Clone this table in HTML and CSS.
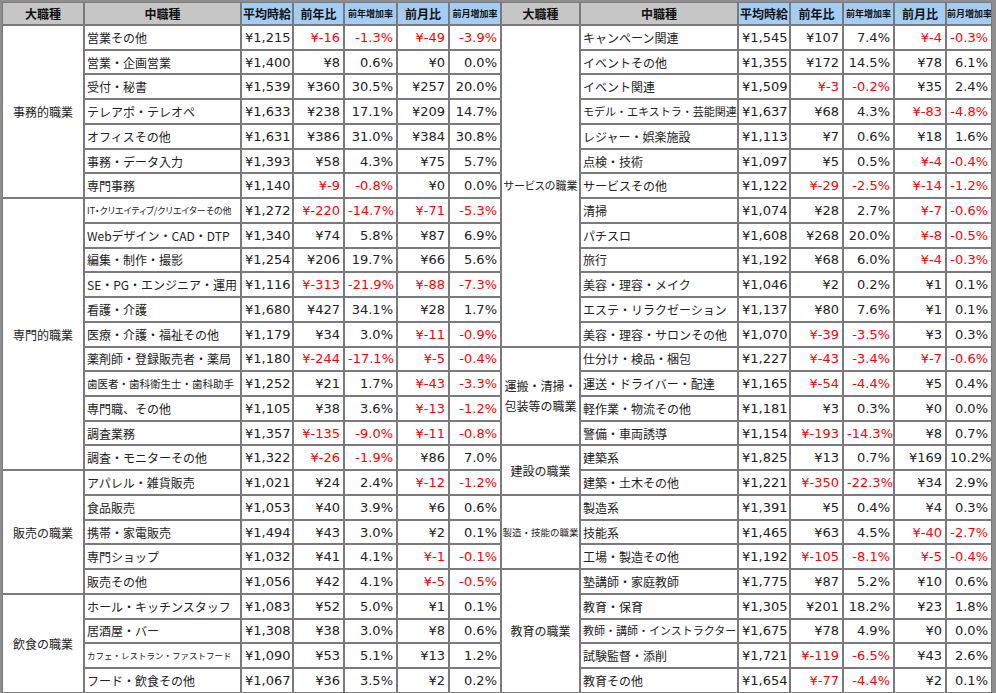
FILE: index.html
```html
<!DOCTYPE html>
<html lang="ja">
<head>
<meta charset="utf-8">
<link rel="stylesheet" href="styles.css">
</head>
<body>
<div class="frame">
<table class="grid">
<colgroup>
<col class="w-big"><col class="w-mid"><col class="w-52"><col class="w-51"><col class="w-53"><col class="w-52"><col class="w-52">
<col class="w-big2"><col class="w-mid2"><col class="w-52"><col class="w-53"><col class="w-51"><col class="w-52"><col class="w-46">
</colgroup>
<thead>
<tr>
<th class="hg">大職種</th><th class="hg">中職種</th><th class="hb">平均時給</th><th class="hb">前年比</th><th class="hb sm">前年増加率</th><th class="hb">前月比</th><th class="hb sm">前月増加率</th>
<th class="hg">大職種</th><th class="hg">中職種</th><th class="hb">平均時給</th><th class="hb">前年比</th><th class="hb sm">前年増加率</th><th class="hb">前月比</th><th class="hb sm">前月増加率</th>
</tr>
</thead>
<tbody>
<tr>
<td class="big" rowspan="7">事務的職業</td><td class="mid">営業その他</td><td>¥1,215</td><td class="n">¥-16</td><td class="n">-1.3%</td><td class="n">¥-49</td><td class="n">-3.9%</td>
<td class="big s11 pa" rowspan="13">サービスの職業</td><td class="mid">キャンペーン関連</td><td>¥1,545</td><td>¥107</td><td>7.4%</td><td class="n">¥-4</td><td class="n">-0.3%</td>
</tr>
<tr>
<td class="mid">営業・企画営業</td><td>¥1,400</td><td>¥8</td><td>0.6%</td><td>¥0</td><td>0.0%</td>
<td class="mid">イベントその他</td><td>¥1,355</td><td>¥172</td><td>14.5%</td><td>¥78</td><td>6.1%</td>
</tr>
<tr>
<td class="mid">受付・秘書</td><td>¥1,539</td><td>¥360</td><td>30.5%</td><td>¥257</td><td>20.0%</td>
<td class="mid">イベント関連</td><td>¥1,509</td><td class="n">¥-3</td><td class="n">-0.2%</td><td>¥35</td><td>2.4%</td>
</tr>
<tr>
<td class="mid">テレアポ・テレオペ</td><td>¥1,633</td><td>¥238</td><td>17.1%</td><td>¥209</td><td>14.7%</td>
<td class="mid s11">モデル・エキストラ・芸能関連</td><td>¥1,637</td><td>¥68</td><td>4.3%</td><td class="n">¥-83</td><td class="n">-4.8%</td>
</tr>
<tr>
<td class="mid">オフィスその他</td><td>¥1,631</td><td>¥386</td><td>31.0%</td><td>¥384</td><td>30.8%</td>
<td class="mid">レジャー・娯楽施設</td><td>¥1,113</td><td>¥7</td><td>0.6%</td><td>¥18</td><td>1.6%</td>
</tr>
<tr>
<td class="mid">事務・データ入力</td><td>¥1,393</td><td>¥58</td><td>4.3%</td><td>¥75</td><td>5.7%</td>
<td class="mid">点検・技術</td><td>¥1,097</td><td>¥5</td><td>0.5%</td><td class="n">¥-4</td><td class="n">-0.4%</td>
</tr>
<tr>
<td class="mid">専門事務</td><td>¥1,140</td><td class="n">¥-9</td><td class="n">-0.8%</td><td>¥0</td><td>0.0%</td>
<td class="mid">サービスその他</td><td>¥1,122</td><td class="n">¥-29</td><td class="n">-2.5%</td><td class="n">¥-14</td><td class="n">-1.2%</td>
</tr>
<tr>
<td class="big" rowspan="11">専門的職業</td><td class="mid s9 pa">IT・クリエイティブ/クリエイターその他</td><td>¥1,272</td><td class="n">¥-220</td><td class="n">-14.7%</td><td class="n">¥-71</td><td class="n">-5.3%</td>
<td class="mid">清掃</td><td>¥1,074</td><td>¥28</td><td>2.7%</td><td class="n">¥-7</td><td class="n">-0.6%</td>
</tr>
<tr>
<td class="mid">Webデザイン・CAD・DTP</td><td>¥1,340</td><td>¥74</td><td>5.8%</td><td>¥87</td><td>6.9%</td>
<td class="mid">パチスロ</td><td>¥1,608</td><td>¥268</td><td>20.0%</td><td class="n">¥-8</td><td class="n">-0.5%</td>
</tr>
<tr>
<td class="mid">編集・制作・撮影</td><td>¥1,254</td><td>¥206</td><td>19.7%</td><td>¥66</td><td>5.6%</td>
<td class="mid">旅行</td><td>¥1,192</td><td>¥68</td><td>6.0%</td><td class="n">¥-4</td><td class="n">-0.3%</td>
</tr>
<tr>
<td class="mid">SE・PG・エンジニア・運用</td><td>¥1,116</td><td class="n">¥-313</td><td class="n">-21.9%</td><td class="n">¥-88</td><td class="n">-7.3%</td>
<td class="mid">美容・理容・メイク</td><td>¥1,046</td><td>¥2</td><td>0.2%</td><td>¥1</td><td>0.1%</td>
</tr>
<tr>
<td class="mid">看護・介護</td><td>¥1,680</td><td>¥427</td><td>34.1%</td><td>¥28</td><td>1.7%</td>
<td class="mid">エステ・リラクゼーション</td><td>¥1,137</td><td>¥80</td><td>7.6%</td><td>¥1</td><td>0.1%</td>
</tr>
<tr>
<td class="mid">医療・介護・福祉その他</td><td>¥1,179</td><td>¥34</td><td>3.0%</td><td class="n">¥-11</td><td class="n">-0.9%</td>
<td class="mid">美容・理容・サロンその他</td><td>¥1,070</td><td class="n">¥-39</td><td class="n">-3.5%</td><td>¥3</td><td>0.3%</td>
</tr>
<tr>
<td class="mid">薬剤師・登録販売者・薬局</td><td>¥1,180</td><td class="n">¥-244</td><td class="n">-17.1%</td><td class="n">¥-5</td><td class="n">-0.4%</td>
<td class="big two" rowspan="4">運搬・清掃・<br>包装等の職業</td><td class="mid">仕分け・検品・梱包</td><td>¥1,227</td><td class="n">¥-43</td><td class="n">-3.4%</td><td class="n">¥-7</td><td class="n">-0.6%</td>
</tr>
<tr>
<td class="mid s10">歯医者・歯科衛生士・歯科助手</td><td>¥1,252</td><td>¥21</td><td>1.7%</td><td class="n">¥-43</td><td class="n">-3.3%</td>
<td class="mid">運送・ドライバー・配達</td><td>¥1,165</td><td class="n">¥-54</td><td class="n">-4.4%</td><td>¥5</td><td>0.4%</td>
</tr>
<tr>
<td class="mid">専門職、その他</td><td>¥1,105</td><td>¥38</td><td>3.6%</td><td class="n">¥-13</td><td class="n">-1.2%</td>
<td class="mid">軽作業・物流その他</td><td>¥1,181</td><td>¥3</td><td>0.3%</td><td>¥0</td><td>0.0%</td>
</tr>
<tr>
<td class="mid">調査業務</td><td>¥1,357</td><td class="n">¥-135</td><td class="n">-9.0%</td><td class="n">¥-11</td><td class="n">-0.8%</td>
<td class="mid">警備・車両誘導</td><td>¥1,154</td><td class="n">¥-193</td><td class="n">-14.3%</td><td>¥8</td><td>0.7%</td>
</tr>
<tr>
<td class="mid">調査・モニターその他</td><td>¥1,322</td><td class="n">¥-26</td><td class="n">-1.9%</td><td>¥86</td><td>7.0%</td>
<td class="big" rowspan="2">建設の職業</td><td class="mid">建築系</td><td>¥1,825</td><td>¥13</td><td>0.7%</td><td>¥169</td><td>10.2%</td>
</tr>
<tr>
<td class="big" rowspan="5">販売の職業</td><td class="mid">アパレル・雑貨販売</td><td>¥1,021</td><td>¥24</td><td>2.4%</td><td class="n">¥-12</td><td class="n">-1.2%</td>
<td class="mid">建築・土木その他</td><td>¥1,221</td><td class="n">¥-350</td><td class="n">-22.3%</td><td>¥34</td><td>2.9%</td>
</tr>
<tr>
<td class="mid">食品販売</td><td>¥1,053</td><td>¥40</td><td>3.9%</td><td>¥6</td><td>0.6%</td>
<td class="big s95" rowspan="3">製造・技能の職業</td><td class="mid">製造系</td><td>¥1,391</td><td>¥5</td><td>0.4%</td><td>¥4</td><td>0.3%</td>
</tr>
<tr>
<td class="mid">携帯・家電販売</td><td>¥1,494</td><td>¥43</td><td>3.0%</td><td>¥2</td><td>0.1%</td>
<td class="mid">技能系</td><td>¥1,465</td><td>¥63</td><td>4.5%</td><td class="n">¥-40</td><td class="n">-2.7%</td>
</tr>
<tr>
<td class="mid">専門ショップ</td><td>¥1,032</td><td>¥41</td><td>4.1%</td><td class="n">¥-1</td><td class="n">-0.1%</td>
<td class="mid">工場・製造その他</td><td>¥1,192</td><td class="n">¥-105</td><td class="n">-8.1%</td><td class="n">¥-5</td><td class="n">-0.4%</td>
</tr>
<tr>
<td class="mid">販売その他</td><td>¥1,056</td><td>¥42</td><td>4.1%</td><td class="n">¥-5</td><td class="n">-0.5%</td>
<td class="big" rowspan="5">教育の職業</td><td class="mid">塾講師・家庭教師</td><td>¥1,775</td><td>¥87</td><td>5.2%</td><td>¥10</td><td>0.6%</td>
</tr>
<tr>
<td class="big" rowspan="4">飲食の職業</td><td class="mid">ホール・キッチンスタッフ</td><td>¥1,083</td><td>¥52</td><td>5.0%</td><td>¥1</td><td>0.1%</td>
<td class="mid">教育・保育</td><td>¥1,305</td><td>¥201</td><td>18.2%</td><td>¥23</td><td>1.8%</td>
</tr>
<tr>
<td class="mid">居酒屋・バー</td><td>¥1,308</td><td>¥38</td><td>3.0%</td><td>¥8</td><td>0.6%</td>
<td class="mid s11">教師・講師・インストラクター</td><td>¥1,675</td><td>¥78</td><td>4.9%</td><td>¥0</td><td>0.0%</td>
</tr>
<tr>
<td class="mid s85">カフェ・レストラン・ファストフード</td><td>¥1,090</td><td>¥53</td><td>5.1%</td><td>¥13</td><td>1.2%</td>
<td class="mid">試験監督・添削</td><td>¥1,721</td><td class="n">¥-119</td><td class="n">-6.5%</td><td>¥43</td><td>2.6%</td>
</tr>
<tr>
<td class="mid">フード・飲食その他</td><td>¥1,067</td><td>¥36</td><td>3.5%</td><td>¥2</td><td>0.2%</td>
<td class="mid">教育その他</td><td>¥1,654</td><td class="n">¥-77</td><td class="n">-4.4%</td><td>¥2</td><td>0.1%</td>
</tr>
</tbody>
</table>
</div>
</body>
</html>
```
FILE: styles.css
```css
html, body {
  margin: 0;
  padding: 0;
  background: #8e8e8e;
}
.frame {
  padding: 2px 4px 0 2px;
  width: 990px;
}
.grid {
  width: 990px;
  table-layout: fixed;
  border-collapse: separate;
  border-spacing: 0;
  background: #ffffff;
  font-family: "DejaVu Sans", "Noto Sans CJK JP", sans-serif;
  font-size: 13px;
  color: #222222;
}
.w-big { width: 82px; }
.w-mid { width: 157px; }
.w-big2 { width: 79px; }
.w-mid2 { width: 158px; }
.w-52 { width: 52px; }
.w-51 { width: 51px; }
.w-53 { width: 53px; }
.w-46 { width: 46px; }

.grid th, .grid td {
  border: 1px solid #7a7a7a;
  padding: 0 3px;
  white-space: nowrap;
  overflow: hidden;
  vertical-align: middle;
  line-height: 15px;
}
.grid thead tr { height: 23px; }
.grid tbody tr { height: 24.74px; }

.grid th {
  font-family: "Noto Sans CJK JP", sans-serif;
  font-weight: bold;
  font-size: 12px;
  text-align: center;
  padding: 0;
  color: #111111;
}
.grid th.hg { background: #c6c6c6; }
.grid th.hb { background: #a3cdf4; }
.grid th.sm { font-size: 9px; }

.grid td { text-align: right; }
.grid td.mid {
  text-align: left;
  font-family: "Noto Sans CJK JP", sans-serif;
  font-size: 12px;
  padding-left: 2px;
}
.grid td.big {
  text-align: center;
  font-family: "Noto Sans CJK JP", sans-serif;
  font-size: 12px;
  padding: 0;
}
.grid td.two { line-height: 20px; font-size: 12px; }
.grid td.n { color: #ff0000; }
.grid td.s85 { font-size: 8.5px; }
.grid td.s9 { font-size: 9px; }
.grid td.s95 { font-size: 9.5px; }
.grid td.s10 { font-size: 10.5px; }
.grid td.s11 { font-size: 11px; }
.grid .pa { font-feature-settings: "palt"; }
```
